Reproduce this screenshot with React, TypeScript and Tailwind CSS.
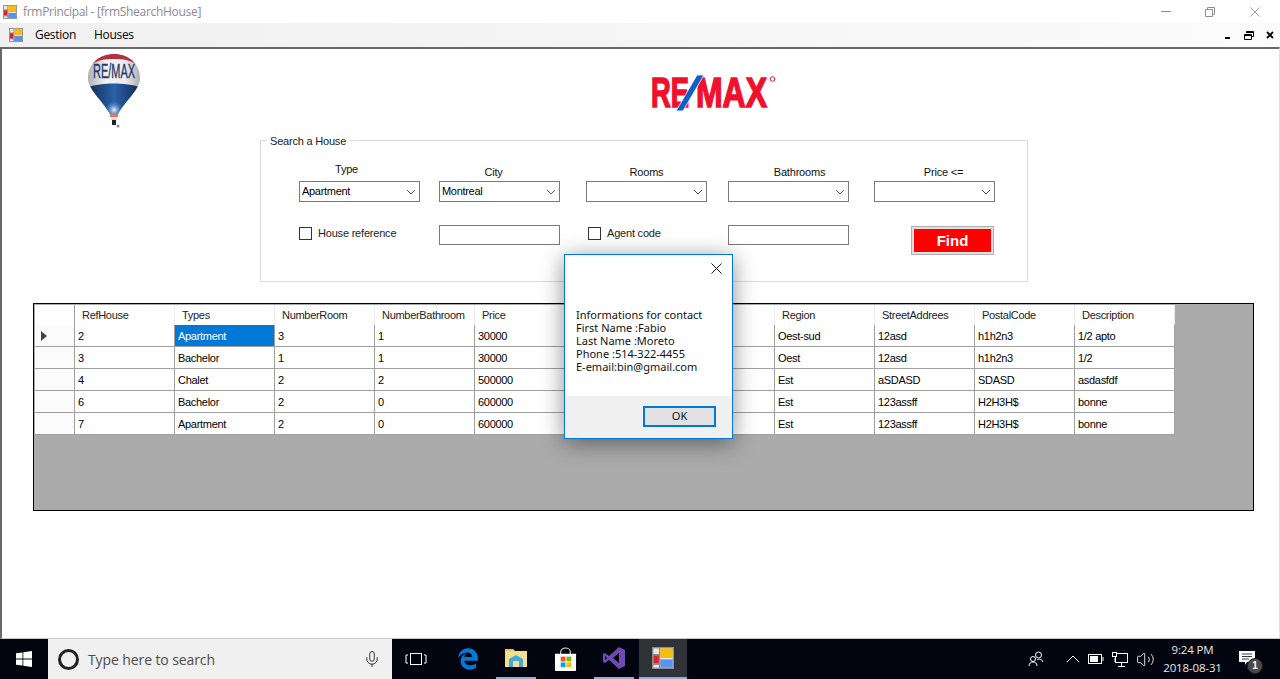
import React from 'react';
import { Mic, ChevronUp, Volume2 } from 'lucide-react';
import { FaEdgeLegacy } from 'react-icons/fa6';

const columns = ['RefHouse', 'Types', 'NumberRoom', 'NumberBathroom', 'Price', '', '', 'Region', 'StreetAddrees', 'PostalCode', 'Description'];

const rows = [
  ['2', 'Apartment', '3', '1', '30000', '', '', 'Oest-sud', '12asd', 'h1h2n3', '1/2 apto'],
  ['3', 'Bachelor', '1', '1', '30000', '', '', 'Oest', '12asd', 'h1h2n3', '1/2'],
  ['4', 'Chalet', '2', '2', '500000', '', '', 'Est', 'aSDASD', 'SDASD', 'asdasfdf'],
  ['6', 'Bachelor', '2', '0', '600000', '', '', 'Est', '123assff', 'H2H3H$', 'bonne'],
  ['7', 'Apartment', '2', '0', '600000', '', '', 'Est', '123assff', 'H2H3H$', 'bonne'],
];

const AppIcon = ({ className }: { className: string }) => (
  <svg viewBox="0 0 16 16" className={className}>
    <rect x="0.5" y="0.5" width="15" height="15" fill="#e8e8e8" stroke="#8d8d8d" />
    <path d="M0 5.500h6M0 12.500h6M5.500 0v16" stroke="#8d8d8d" />
    <rect x="1" y="6" width="4" height="6" fill="#d8262c" />
    <rect x="6" y="1" width="9" height="7" fill="#f5bd10" />
    <rect x="6" y="9" width="9" height="6" fill="#5b93ea" />
  </svg>
);

const CloseGlyph = ({ className, color }: { className: string; color: string }) => (
  <svg viewBox="0 0 12 12" className={className} fill="none" stroke={color}>
    <path d="M0.500 0.500L11.500 11.500M11.500 0.500L0.500 11.500" />
  </svg>
);

const Balloon = () => (
  <svg viewBox="0 0 56 76" className="h-[76px] w-[56px]">
    <defs>
      <clipPath id="envelope">
        <path d="M28 2C43 2 54 12 54 26C54 38 40 48 32 62H24C16 48 2 38 2 26C2 12 13 2 28 2Z" />
      </clipPath>
      <linearGradient id="silver" x1="0" x2="1" y1="0" y2="0">
        <stop offset="0" stopColor="#a9a9a9" />
        <stop offset="0.35" stopColor="#f1f1f1" />
        <stop offset="0.7" stopColor="#ececec" />
        <stop offset="1" stopColor="#a5a5a5" />
      </linearGradient>
      <linearGradient id="navy" x1="0" x2="1" y1="0" y2="0">
        <stop offset="0" stopColor="#12264f" />
        <stop offset="0.5" stopColor="#2a62a8" />
        <stop offset="1" stopColor="#12264f" />
      </linearGradient>
      <radialGradient id="glow" cx="0.5" cy="0.5" r="0.5">
        <stop offset="0" stopColor="#e8f2ff" />
        <stop offset="1" stopColor="#3f86d8" stopOpacity="0" />
      </radialGradient>
    </defs>
    <g clipPath="url(#envelope)">
      <rect width="56" height="34" fill="url(#silver)" />
      <path d="M0 0H56V16C46 8 38 7 28 7C18 7 10 8 0 16Z" fill="#b5303f" />
      <path d="M0 36C14 30 42 30 56 36V70H0Z" fill="url(#navy)" />
      <ellipse cx="28" cy="58" rx="9" ry="9" fill="url(#glow)" />
    </g>
    <text x="7" y="26" fontFamily="Liberation Sans" fontSize="20" fill="#233a6e" stroke="#233a6e" strokeWidth="0.4" textLength="42" lengthAdjust="spacingAndGlyphs">RE/MAX</text>
    <rect x="24" y="62" width="8" height="3" fill="#c9806f" />
    <rect x="25" y="65" width="6" height="3" fill="#e8d8d0" />
    <rect x="26" y="68" width="4" height="5" fill="#222" />
    <circle cx="32" cy="74" r="1.500" fill="#888" />
  </svg>
);

const RemaxLogo = () => (
  <svg viewBox="0 0 126 36" className="h-[36px] w-[126px]">
    <text x="1" y="32" fontFamily="Liberation Sans" fontWeight="700" fontSize="43" fill="#f0102e" stroke="#f0102e" strokeWidth="1.600" textLength="38" lengthAdjust="spacingAndGlyphs">RE</text>
    <text x="46" y="32" fontFamily="Liberation Sans" fontWeight="700" fontSize="43" fill="#f0102e" stroke="#f0102e" strokeWidth="1.600" textLength="71" lengthAdjust="spacingAndGlyphs">MAX</text>
    <path d="M47 0H54L33 36H26Z" fill="#0f5fc4" stroke="#fff" strokeWidth="0.8" />
    <circle cx="122.500" cy="4" r="2.300" fill="none" stroke="#f0102e" />
  </svg>
);

const ComboBox = ({ value }: { value?: string }) => (
  <div className="flex h-[21px] w-[121px] items-center justify-between border border-[#7a7a7a] bg-white pl-[2px] pr-[3px] text-left">
    <span className="text-[11px] tracking-[-0.3px] text-black">{value}</span>
    <svg viewBox="0 0 10 6" className="h-[6px] w-[10px]">
      <path d="M1 1l4 4 4-4" fill="none" stroke="#555" />
    </svg>
  </div>
);

const CheckLabel = ({ label }: { label: string }) => (
  <div className="flex items-center gap-[6px]">
    <div className="h-[13px] w-[13px] border border-[#333] bg-white" />
    <span className="pt-px text-[11px] leading-[13px] tracking-[-0.2px] text-[#222]">{label}</span>
  </div>
);

const SearchBox = () => (
  <div className="relative ml-[258px] h-[142px] w-[768px] border border-[#dcdcdc] pl-[38px]">
    <span className="absolute left-[6px] top-[-7px] bg-white px-[3px] text-[11px] leading-[14px] tracking-[-0.2px] text-[#222]">Search a House</span>
    <div className="flex h-[61px] items-end text-center text-[11px] tracking-[-0.2px] text-[#111]">
      <div className="w-[121px]">
        <div className="mb-[5px] pr-[26px] leading-[14px]">Type</div>
        <ComboBox value="Apartment" />
      </div>
      <div className="ml-[19px] w-[121px]">
        <div className="mb-[2px] pr-[12px] leading-[14px]">City</div>
        <ComboBox value="Montreal" />
      </div>
      <div className="ml-[26px] w-[121px]">
        <div className="mb-[2px] leading-[14px]">Rooms</div>
        <ComboBox />
      </div>
      <div className="ml-[21px] w-[121px]">
        <div className="mb-[2px] pl-[22px] leading-[14px]">Bathrooms</div>
        <ComboBox />
      </div>
      <div className="ml-[25px] w-[121px]">
        <div className="mb-[2px] pl-[18px] leading-[14px]">Price &lt;=</div>
        <ComboBox />
      </div>
    </div>
    <div className="mt-[23px] flex items-start">
      <div className="w-[140px] pt-[1px]">
        <CheckLabel label="House reference" />
      </div>
      <div className="h-[20px] w-[121px] border border-[#7a7a7a] bg-white" />
      <div className="ml-[28px] w-[140px] pt-[1px]">
        <CheckLabel label="Agent code" />
      </div>
      <div className="h-[20px] w-[121px] border border-[#7a7a7a] bg-white" />
      <div className="ml-[62px] mt-[1px] h-[29px] w-[83px] border border-[#adadad] bg-[#e1e1e1] p-[2px]">
        <div className="flex h-full items-center justify-center bg-[#ff0000] pt-px text-[15px] font-bold text-white">Find</div>
      </div>
    </div>
  </div>
);

const DataGrid = () => (
  <div className="ml-[31px] mt-[21px] h-[208px] w-[1221px] border border-black bg-[#ababab] p-px text-[11px] tracking-[-0.3px] text-black">
    <div className="flex h-[20px]">
      <div className="w-[40px] border-r border-[#a0a0a0] bg-white" />
      {columns.map((name, i) => (
        <div key={i} className="flex w-[100px] items-center border-r border-[#ececec] bg-white pl-[7px] leading-none text-[#222]">{name}</div>
      ))}
    </div>
    {rows.map((row, r) => (
      <div key={r} className="flex h-[22px]">
        <div className="flex w-[40px] items-center border-b border-r border-[#a0a0a0] bg-[#fbfbfb] pl-[6px]">
          {r === 0 && (
            <svg viewBox="0 0 6 10" className="h-[10px] w-[6px]">
              <path d="M0 0l6 5-6 5z" fill="#444" />
            </svg>
          )}
        </div>
        {row.map((cell, c) => (
          <div
            key={c}
            className={
              r === 0 && c === 1
                ? 'flex w-[100px] items-center border-b border-r border-[#a0a0a0] bg-[#0078d7] pl-[3px] pt-px text-white'
                : 'flex w-[100px] items-center border-b border-r border-[#a0a0a0] bg-white pl-[3px] pt-px'
            }
          >
            {cell}
          </div>
        ))}
      </div>
    ))}
  </div>
);

const MessageBox = () => (
  <div className="absolute left-[564px] top-[254px] flex h-[185px] w-[169px] flex-col border border-[#0078d7] bg-white font-['Noto_Sans',sans-serif] shadow-[0_4px_22px_rgba(0,0,0,0.45)]">
    <div className="flex h-[141px] flex-col">
      <div className="flex h-[20px] justify-end pr-[10px] pt-[8px]">
        <CloseGlyph className="h-[11px] w-[11px]" color="#000" />
      </div>
      <div className="ml-[11px] mt-[33px] text-[11px] leading-[13px] text-[#111]">
        <div>Informations for contact</div>
        <div>First Name :Fabio</div>
        <div>Last Name :Moreto</div>
        <div>Phone :514-322-4455</div>
        <div>E-email:bin@gmail.com</div>
      </div>
    </div>
    <div className="flex flex-1 justify-end bg-[#f0f0f0] pr-[16px] pt-[10px]">
      <div className="flex h-[21px] w-[73px] items-center justify-center border-[2px] border-[#0078d7] bg-[#e1e1e1] text-[11px] text-[#111]">OK</div>
    </div>
  </div>
);

const Taskbar = () => (
  <div className="flex h-[40px] items-stretch bg-[#020510] text-white">
    <div className="flex w-[48px] items-center justify-center">
      <svg viewBox="0 0 16 16" className="h-[16px] w-[16px]" fill="#fff">
        <path d="M0 2.300L6.500 1.400V7.600H0ZM7.300 1.300L16 0V7.600H7.300ZM0 8.400H6.500V14.600L0 13.700ZM7.300 8.400H16V16L7.300 14.700Z" />
      </svg>
    </div>
    <div className="flex w-[344px] items-center bg-[#f0f0f0]">
      <div className="ml-[10px] h-[21px] w-[21px] rounded-full border-[3px] border-[#222]" />
      <span className="ml-[9px] font-['Open_Sans',sans-serif] text-[14px] tracking-[-0.1px] text-[#4c4c4c]">Type here to search</span>
      <Mic className="ml-auto mr-[11px] h-[18px] w-[18px] text-[#333]" strokeWidth={1.3} />
    </div>
    <div className="flex w-[48px] items-center justify-center">
      <svg viewBox="0 0 22 14" className="h-[14px] w-[22px]" fill="none" stroke="#fff">
        <rect x="5.500" y="1.500" width="11" height="11" />
        <path d="M3 3H1V11H3M19 3H21V11H19" />
      </svg>
    </div>
    <div className="flex w-[56px] items-center justify-center">
      <FaEdgeLegacy className="h-[22px] w-[22px] text-[#0078d7]" />
    </div>
    <div className="flex w-[40px] items-center justify-center border-b-[2px] border-[#76b9ed]">
      <svg viewBox="0 0 22 20" className="h-[20px] w-[22px]">
        <path d="M0 1H8L10 3H22V19H0Z" fill="#f7de8d" />
        <path d="M0 1H8L9 3H0Z" fill="#e5c35a" />
        <path d="M4 19V11L11 7L18 11V19H14V13H8V19Z" fill="#3fa9dd" />
      </svg>
    </div>
    <div className="flex w-[58px] items-center justify-center">
      <svg viewBox="0 0 24 26" className="h-[25px] w-[23px]">
        <path d="M7 8V5A5 4 0 0 1 17 5V8" fill="none" stroke="#ddd" strokeWidth="1.200" />
        <path d="M1 7H23V24Q23 25 22 25H2Q1 25 1 24Z" fill="#fff" />
        <rect x="7" y="10" width="5" height="5" fill="#f25022" />
        <rect x="13" y="10" width="5" height="5" fill="#7fba00" />
        <rect x="7" y="16" width="5" height="5" fill="#00a4ef" />
        <rect x="13" y="16" width="5" height="5" fill="#ffb900" />
      </svg>
    </div>
    <div className="flex w-[40px] items-center justify-center border-b-[2px] border-[#76b9ed]">
      <svg viewBox="0 0 24 24" className="h-[24px] w-[24px]">
        <path fillRule="evenodd" d="M17 1L23 4V20L17 23L7 14L3 17L1 16V8L3 7L7 10ZM17 7L11 12L17 17ZM3 10V14L5 12Z" fill="#6d4bb0" />
      </svg>
    </div>
    <div className="ml-[5px] flex w-[48px] items-center justify-center border-b-[2px] border-[#76b9ed] bg-[#2f3338]">
      <AppIcon className="h-[22px] w-[22px]" />
    </div>
    <div className="ml-auto flex items-center">
      <svg viewBox="0 0 16 16" className="mr-[17px] h-[16px] w-[16px]" fill="none" stroke="#fff">
        <circle cx="10.500" cy="4" r="3" />
        <circle cx="5" cy="8" r="2.500" />
        <path d="M1 15C1 12 3 11 5 11S9 12 9 15M9 9C11 7.500 14 8 15 11" />
      </svg>
      <ChevronUp className="mr-[3px] h-[24px] w-[24px] text-white" strokeWidth={1} />
      <svg viewBox="0 0 16 10" className="mr-[8px] h-[10px] w-[16px]" fill="none" stroke="#fff">
        <rect x="0.500" y="0.500" width="13" height="9" />
        <rect x="2" y="2" width="8" height="6" fill="#fff" stroke="none" />
        <path d="M15 3V7" />
      </svg>
      <svg viewBox="0 0 16 15" className="mr-[8px] h-[15px] w-[16px]" fill="none" stroke="#fff">
        <rect x="3.500" y="1.500" width="12" height="9" />
        <rect x="0.500" y="0.500" width="4" height="4" fill="#020510" />
        <path d="M3 10V6M9.500 11V14M6 14.500H13" />
      </svg>
      <Volume2 className="mr-[1px] h-[19px] w-[19px] text-white" strokeWidth={1.1} />
      <div className="flex w-[73px] flex-col items-center font-['Open_Sans',sans-serif] text-[11.500px] leading-[18px] tracking-[-0.15px] text-[#e8e8e8]">
        <span>9:24 PM</span>
        <span>2018-08-31</span>
      </div>
      <div className="relative ml-[10px] mr-[11px] h-[40px] w-[30px]">
        <svg viewBox="0 0 16 14" className="absolute left-0 top-[12px] h-[14px] w-[16px]">
          <path d="M0 0H16V11H8L6 14V11H0Z" fill="#fff" />
          <path d="M3 3H13M3 5.500H13M3 8H10" stroke="#020510" strokeWidth="0.800" />
        </svg>
        <span className="absolute left-[8px] top-[19px] flex h-[16px] w-[16px] items-center justify-center rounded-full border border-[#222] bg-[#4a4a4a] text-[10px] font-bold leading-none text-white">1</span>
      </div>
    </div>
  </div>
);

export default function App() {
  return (
    <div className="relative flex h-[679px] w-[1280px] flex-col overflow-hidden bg-white font-['Liberation_Sans',sans-serif]">
      <div className="flex h-[23px] items-center bg-white pl-[3px] font-['Open_Sans',sans-serif] text-[12px] tracking-[-0.3px] text-[#8a8a94]">
        <AppIcon className="h-[14px] w-[14px]" />
        <span className="ml-[6px]">frmPrincipal - [frmShearchHouse]</span>
        <div className="ml-auto flex items-center pr-[20px]">
          <div className="h-px w-[10px] bg-[#8e8e8e]" />
          <svg viewBox="0 0 10 10" className="ml-[34px] h-[10px] w-[10px]" fill="none" stroke="#8e8e8e">
            <path d="M2.500 2.500V0.500H9.500V7.500H7.500M0.500 2.500H7.500V9.500H0.500Z" />
          </svg>
          <CloseGlyph className="ml-[35px] h-[10px] w-[10px]" color="#8e8e8e" />
        </div>
      </div>
      <div className="flex h-[24px] items-center bg-gradient-to-r from-[#f0f0f0] to-[#fbfbfb] pl-[9px] font-['Open_Sans',sans-serif] text-[12px] tracking-[-0.3px] text-black">
        <AppIcon className="h-[14px] w-[14px]" />
        <span className="ml-[12px]">Gestion</span>
        <span className="ml-[18px]">Houses</span>
        <div className="ml-auto flex items-center pr-[6px]">
          <div className="mt-[6px] h-[2px] w-[5px] bg-black" />
          <svg viewBox="0 0 10 9" className="ml-[14px] h-[9px] w-[10px]" fill="none" stroke="#000">
            <path d="M2.500 2V0.500H9.500V5.500H7.500M0.500 3.500H7.500V8.500H0.500ZM2.500 1.500H9.500M0.500 4.500H7.500" />
          </svg>
          <svg viewBox="0 0 8 8" className="ml-[12px] h-[8px] w-[8px]" fill="none" stroke="#000" strokeWidth="1.800">
            <path d="M1 1L7 7M7 1L1 7" />
          </svg>
        </div>
      </div>
      <div className="flex-1 border-b border-l-2 border-r border-t-2 border-b-[#c8c8c8] border-l-[#696969] border-r-[#e0e0e0] border-t-[#696969]">
        <div className="flex h-[91px]">
          <div className="ml-[84px] mt-[3px]">
            <Balloon />
          </div>
          <div className="ml-[508px] mt-[26px]">
            <RemaxLogo />
          </div>
        </div>
        <SearchBox />
        <DataGrid />
      </div>
      <Taskbar />
      <MessageBox />
    </div>
  );
}
